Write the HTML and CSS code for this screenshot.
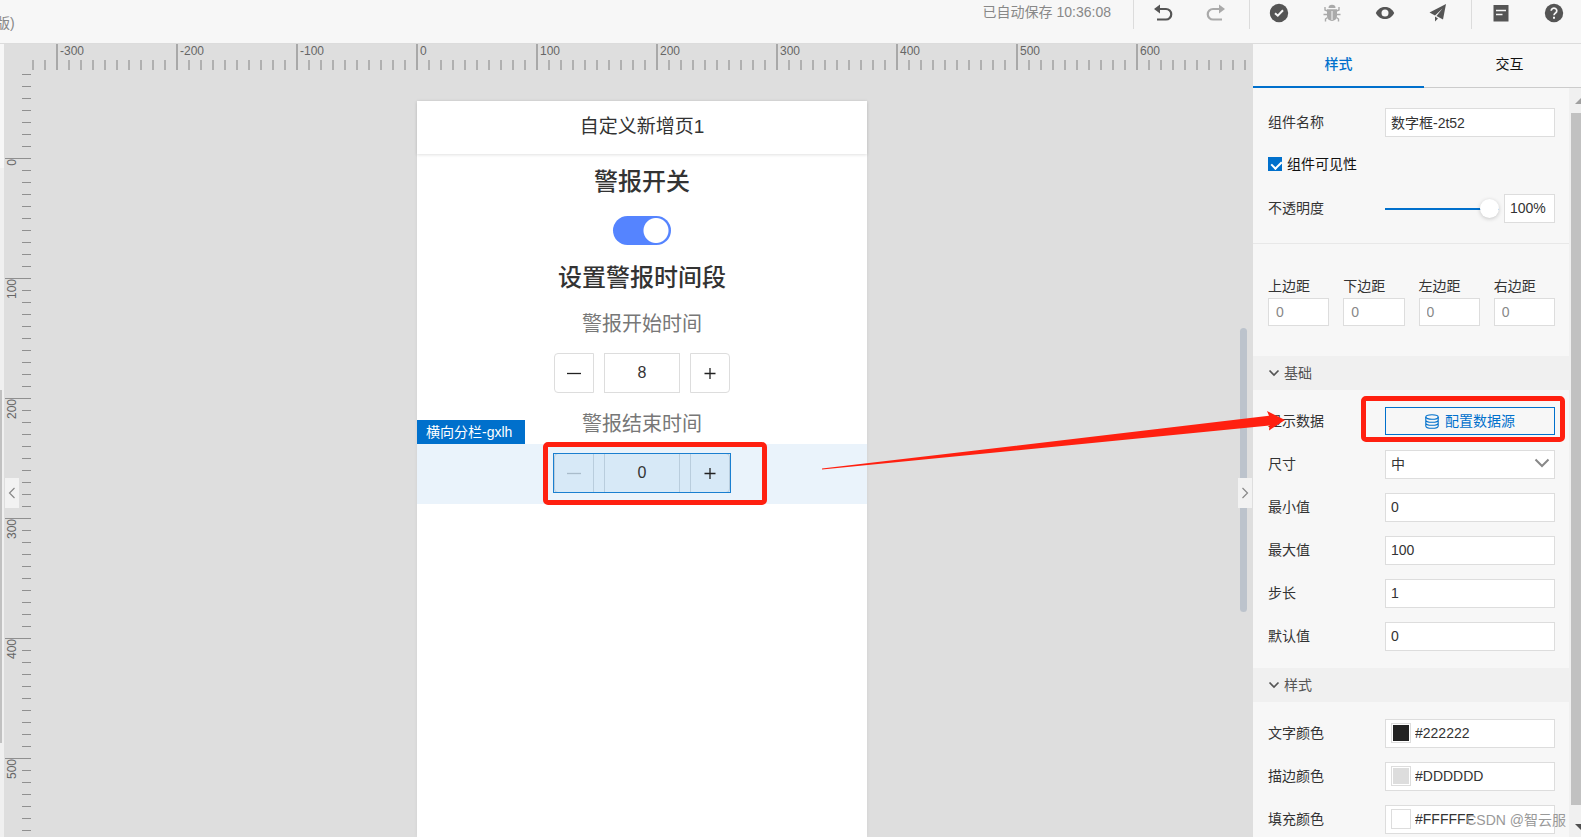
FILE: index.html
```html
<!DOCTYPE html>
<html lang="zh-CN">
<head>
<meta charset="utf-8">
<title>自定义新增页1</title>
<link rel="stylesheet" href="styles.css">
</head>
<body>
<header class="topbar">
  <span class="project">版)</span>
  <div class="actions">
    <span class="saved">已自动保存 10:36:08</span>
    <div class="group">
      <button class="tool" aria-label="撤销"><svg width="20" height="20" viewBox="0 0 20 20"><path d="M6 6H13a3.900 3.900 0 0 1 0 10.500H4" fill="none" stroke="#555" stroke-width="2.200"/><path d="M1 6l6-4.500v9z" fill="#555"/></svg></button>
      <button class="tool" aria-label="重做"><svg width="20" height="20" viewBox="0 0 20 20"><path d="M14 6H7a3.900 3.900 0 0 0 0 10.500h9" fill="none" stroke="#aaa" stroke-width="2.200"/><path d="M19 6l-6-4.500v9z" fill="#aaa"/></svg></button>
    </div>
    <div class="group">
      <button class="tool" aria-label="检查"><svg width="20" height="20" viewBox="0 0 20 20"><circle cx="10" cy="10" r="9.200" fill="#555"/><path d="M6 10.200l2.800 2.500 5.200-5.400" fill="none" stroke="#f7f7f7" stroke-width="2"/></svg></button>
      <button class="tool" aria-label="调试"><svg width="20" height="20" viewBox="0 0 20 20"><path d="M6.500 5a3.500 3.200 0 0 1 7 0z" fill="#aaa"/><path d="M5 6.200h10V13a5 5 0 0 1-10 0z" fill="#aaa"/><path d="M10 8v9" stroke="#f7f7f7"/><path d="M5.500 8L3 7V4M5 11.500H1.500M5.500 14.500L3.500 16v2.500M14.500 8L17 7V4M15 11.500h3.500M14.500 14.500l2 1.500v2.500" fill="none" stroke="#aaa" stroke-width="1.400"/></svg></button>
      <button class="tool" aria-label="预览"><svg width="20" height="20" viewBox="0 0 20 20"><path d="M.8 10C3 5.600 6.500 4 10 4s7 1.600 9.200 6c-2.200 4.400-5.700 6-9.200 6S3 14.400.8 10z" fill="#555"/><circle cx="10" cy="10" r="3.500" fill="#f7f7f7"/></svg></button>
      <button class="tool" aria-label="发布"><svg width="20" height="20" viewBox="0 0 20 20"><path d="M18 1L1.500 9.500l5.500 3L14.500 5.500 8.500 13l6.500 3.500z" fill="#555"/><path d="M7 13.500V18.500l3-3z" fill="#555"/></svg></button>
    </div>
    <div class="group">
      <button class="tool" aria-label="文档"><svg width="20" height="20" viewBox="0 0 20 20"><path d="M2.500 2h15v16.500h-15z" fill="#555"/><path d="M5 7.500h10M5 11.500h6.500" stroke="#f7f7f7" stroke-width="1.600"/></svg></button>
      <button class="tool" aria-label="帮助"><svg width="20" height="20" viewBox="0 0 20 20"><circle cx="10" cy="10" r="9.200" fill="#555"/><path d="M7.200 7.800a2.800 2.600 0 1 1 4.300 2.200c-1 .7-1.500 1.200-1.500 2.300" fill="none" stroke="#f7f7f7" stroke-width="1.700"/><path d="M9 13.700h2v2H9z" fill="#f7f7f7"/></svg></button>
    </div>
  </div>
</header>

<main class="workspace">
  <div class="leftstrip"><div class="leftthumb"></div></div>

  <section class="canvas">
    <div class="hruler">
      <span class="lead"></span><span class="seg">-300</span><span class="seg">-200</span><span class="seg">-100</span><span class="seg">0</span><span class="seg">100</span><span class="seg">200</span><span class="seg">300</span><span class="seg">400</span><span class="seg">500</span><span class="seg">600</span>
    </div>
    <div class="stagerow">
      <div class="vruler">
        <div class="vlead"></div>
        <div class="vseg"><span>0</span></div><div class="vseg"><span>100</span></div><div class="vseg"><span>200</span></div><div class="vseg"><span>300</span></div><div class="vseg"><span>400</span></div><div class="vseg"><span>500</span></div>
      </div>
      <div class="stage">
        <div class="phone">
          <div class="phonetitle">自定义新增页1</div>
          <h2 class="headline first">警报开关</h2>
          <div class="switchrow"><input type="checkbox" class="switch" aria-label="警报开关" checked></div>
          <h2 class="headline">设置警报时间段</h2>
          <label class="caption" for="start">警报开始时间</label>
          <div class="steprow">
            <div class="stepper">
              <button class="step minus" aria-label="减少"><svg width="14" height="14" viewBox="0 0 14 14"><path d="M0 7.500h14" stroke="currentColor" stroke-width="1.300"/></svg></button>
              <input class="stepvalue" id="start" value="8">
              <button class="step plus" aria-label="增加"><svg width="14" height="14" viewBox="0 0 14 14"><path d="M1.500 7.500h11M7 2v11" stroke="currentColor" stroke-width="1.300"/></svg></button>
            </div>
          </div>
          <label class="caption" for="end">警报结束时间</label>
          <div class="steprow selected">
            <span class="tag">横向分栏-gxlh</span>
            <div class="stepper">
              <button class="step minus" aria-label="减少" disabled><svg width="14" height="14" viewBox="0 0 14 14"><path d="M0 7.500h14" stroke="currentColor" stroke-width="1.300"/></svg></button>
              <input class="stepvalue" id="end" value="0">
              <button class="step plus" aria-label="增加"><svg width="14" height="14" viewBox="0 0 14 14"><path d="M1.500 7.500h11M7 2v11" stroke="currentColor" stroke-width="1.300"/></svg></button>
            </div>
          </div>
        </div>
      </div>
    </div>
    <div class="canvasthumb"></div>
    <button class="fold foldleft" aria-label="收起左侧"><svg width="8" height="12" viewBox="0 0 8 12"><path d="M6.500 1L1.500 6l5 5" fill="none" stroke="#888" stroke-width="1.200"/></svg></button>
    <button class="fold foldright" aria-label="收起右侧"><svg width="8" height="12" viewBox="0 0 8 12"><path d="M1.500 1l5 5-5 5" fill="none" stroke="#888" stroke-width="1.200"/></svg></button>
  </section>

  <aside class="panel">
    <nav class="tabs"><button class="tab active">样式</button><button class="tab">交互</button></nav>
    <div class="panelbody">
      <form class="form">
        <div class="rows general">
          <div class="row"><label for="name">组件名称</label><input class="box" id="name" value="数字框-2t52"></div>
          <div class="checkrow"><input type="checkbox" class="check" id="visible" checked><label for="visible">组件可见性</label></div>
          <div class="row"><label for="opacity">不透明度</label>
            <div class="opacity"><input type="range" class="slider" id="opacity" value="100"><input class="box percent" aria-label="不透明度数值" value="100%"></div></div>
        </div>
        <div class="margins">
          <div class="margin"><label for="mt">上边距</label><input class="box" id="mt" placeholder="0"></div>
          <div class="margin"><label for="mb">下边距</label><input class="box" id="mb" placeholder="0"></div>
          <div class="margin"><label for="ml">左边距</label><input class="box" id="ml" placeholder="0"></div>
          <div class="margin"><label for="mr">右边距</label><input class="box" id="mr" placeholder="0"></div>
        </div>
        <h3 class="section"><svg width="12" height="8" viewBox="0 0 12 8"><path d="M1.500 1.500L6 6l4.500-4.500" fill="none" stroke="#555" stroke-width="1.700"/></svg>基础</h3>
        <div class="rows">
          <div class="row"><span>显示数据</span>
            <div class="marked"><button type="button" class="source"><svg width="14" height="15" viewBox="0 0 14 15"><g fill="none" stroke="#0070cc" stroke-width="1.100"><ellipse cx="7" cy="3" rx="6.200" ry="2.300"/><path d="M.8 3v9c0 1.300 2.800 2.300 6.200 2.300s6.200-1 6.200-2.300V3M.8 6c0 1.300 2.800 2.300 6.200 2.300S13.200 7.300 13.200 6M.8 9c0 1.300 2.800 2.300 6.200 2.300s6.200-1 6.200-2.300"/></g></svg>配置数据源</button></div></div>
          <div class="row"><label for="size">尺寸</label>
            <div class="selectwrap"><select class="box" id="size"><option>中</option></select><svg width="16" height="10" viewBox="0 0 16 10"><path d="M1.500 1.500L8 8l6.500-6.500" fill="none" stroke="#888" stroke-width="2"/></svg></div></div>
          <div class="row"><label for="min">最小值</label><input class="box" id="min" value="0"></div>
          <div class="row"><label for="max">最大值</label><input class="box" id="max" value="100"></div>
          <div class="row"><label for="stepsize">步长</label><input class="box" id="stepsize" value="1"></div>
          <div class="row"><label for="default">默认值</label><input class="box" id="default" value="0"></div>
        </div>
        <h3 class="section"><svg width="12" height="8" viewBox="0 0 12 8"><path d="M1.500 1.500L6 6l4.500-4.500" fill="none" stroke="#555" stroke-width="1.700"/></svg>样式</h3>
        <div class="rows">
          <div class="row"><label for="c1">文字颜色</label><div class="box color"><span class="swatch dark"></span><input id="c1" value="#222222"></div></div>
          <div class="row"><label for="c2">描边颜色</label><div class="box color"><span class="swatch grey"></span><input id="c2" value="#DDDDDD"></div></div>
          <div class="row"><label for="c3">填充颜色</label><div class="box color"><span class="swatch white"></span><input id="c3" value="#FFFFFF"></div></div>
        </div>
      </form>
      <div class="scrollbar">
        <svg width="16" height="25" viewBox="0 0 16 25"><path d="M4 16l6-6 6 6z" fill="#a0a0a0"/></svg>
        <div class="scrollthumb"></div>
        <svg width="16" height="32" viewBox="0 0 16 32"><path d="M4 19l6 6 6-6z" fill="#505050"/></svg>
      </div>
    </div>
  </aside>
</main>
<svg class="arrow" width="464" height="60" viewBox="0 0 464 60"><path d="M0 58.600L447 5.700 445 1l18 9-16 10.500.5-5L0 59.600z" fill="#ff2010"/></svg>
<div class="watermark">CSDN @智云服</div>
</body>
</html>
```
FILE: styles.css
```css
* { box-sizing: border-box; }
body {
  margin: 0;
  height: 100vh;
  display: flex;
  flex-direction: column;
  overflow: hidden;
  position: relative;
  background: #f7f7f7;
  color: #333;
  font: 14px/20px "Liberation Sans", "Noto Sans CJK SC", sans-serif;
}
button, input, select { font: inherit; color: inherit; margin: 0; padding: 0; border: 0; background: none; }
input { min-width: 0; }
svg { display: block; flex: none; }

.topbar { flex: none; height: 44px; display: flex; justify-content: space-between; align-items: flex-start; border-bottom: 1px solid #dcdcdc; }
.project { margin-left: -4px; padding-top: 13px; color: #888; }
.actions { display: flex; height: 29px; }
.saved { padding: 2px 22px 0 0; color: #888; }
.group { display: flex; border-left: 1px solid #dcdcdc; padding: 0 7px 0 2px; }
.group:last-child { padding-right: 1px; }
.tool { width: 53px; height: 25px; display: flex; align-items: center; justify-content: center; }

.workspace { flex: 1; min-height: 0; display: flex; }
.leftstrip { width: 4px; flex: none; padding-top: 346px; background: linear-gradient(#f7f7f7 124px, #f0f0f0 124px); }
.leftthumb { width: 2px; height: 353px; background: #c1c1c1; }

.canvas { flex: 1; min-width: 0; display: flex; flex-direction: column; position: relative; background: #dedede; overflow: hidden; color: #666; }
.hruler { height: 26px; flex: none; display: flex; padding-left: 28px; overflow: hidden; font-size: 12px; line-height: 14px; }
.lead, .seg { flex: none; background: repeating-linear-gradient(to right, #b0b0b0 0 2px, transparent 2px 12px) left bottom / 100% 10px no-repeat; }
.lead { width: 24px; }
.seg { width: 120px; padding-left: 4px; background: linear-gradient(#a8a8a8, #a8a8a8) left top / 2px 100% no-repeat, repeating-linear-gradient(to right, #b0b0b0 0 2px, transparent 2px 12px) left bottom / 100% 10px no-repeat; }
.stagerow { flex: 1; min-height: 0; display: flex; }
.vruler { width: 27px; flex: none; padding: 4px 0 0 1px; overflow: hidden; font-size: 12px; line-height: 14px; }
.vlead { height: 84px; background: repeating-linear-gradient(#909090 0 1px, transparent 1px 12px) right top / 9px 100% no-repeat; }
.vseg { height: 120px; padding-top: 1px; background: linear-gradient(#909090, #909090) left top / 100% 1px no-repeat, repeating-linear-gradient(#909090 0 1px, transparent 1px 12px) right top / 9px 100% no-repeat; }
.vseg span { display: block; width: 14px; writing-mode: vertical-rl; transform: rotate(180deg); }
.stage { flex: 1; display: flex; justify-content: center; padding-top: 31px; }
.phone { width: 450px; background: #fff; color: #333; box-shadow: 0 0 4px rgba(0, 0, 0, .06); }
.phonetitle { height: 53px; text-align: center; font-size: 19px; line-height: 52px; box-shadow: 0 1px 3px rgba(0, 0, 0, .12); }
.headline { margin: 0; text-align: center; font-size: 24px; font-weight: 500; line-height: 52px; }
.headline.first { line-height: 56px; }
.switchrow { height: 42px; display: flex; align-items: flex-start; justify-content: center; padding-top: 6px; }
.switch { appearance: none; width: 58px; height: 29px; border-radius: 15px; background: radial-gradient(circle at 43px 50%, #fff 12px, #5584ff 13px); }
.caption { display: block; height: 40px; line-height: 41px; text-align: center; font-size: 20px; color: #777; }
.steprow { height: 60px; display: flex; align-items: flex-start; justify-content: center; padding-top: 9px; position: relative; }
.stepper { display: flex; gap: 10px; position: relative; }
.step { width: 40px; height: 40px; display: flex; align-items: center; justify-content: center; border: 1px solid #ddd; background: #fff; color: #222; }
.minus { border-radius: 4px 0 0 4px; }
.plus { border-radius: 0 4px 4px 0; }
.stepvalue { width: 76px; height: 40px; border: 1px solid #ddd; text-align: center; font-size: 16px; }
.selected { background: #eaf3fb; }
.selected .stepper { background: #d7e9f7; }
.selected .step, .selected .stepvalue { background: #d7e9f7; border-color: #b9cddd; }
.selected .step:disabled { color: #a9bccb; }
.selected .stepper::before { content: ""; position: absolute; inset: 0 -1px; border: 1px solid #1a7fd0; pointer-events: none; }
.selected .stepper::after { content: ""; position: absolute; inset: -11px -37px -12px -11px; border: 5px solid #ff2010; border-radius: 5px; pointer-events: none; }
.tag { position: absolute; left: 0; bottom: 100%; height: 24px; padding: 0 13px 0 9px; line-height: 25px; background: #0070cc; color: #fff; }
.canvasthumb { position: absolute; right: 6px; top: 284px; width: 7px; height: 284px; border-radius: 4px; background: #bcc3cc; }
.fold { position: absolute; top: 434px; width: 14px; height: 30px; display: flex; align-items: center; justify-content: center; background: #f2f2f2; }
.foldleft { left: 1px; }
.foldright { right: 1px; }

.panel { width: 328px; flex: none; display: flex; flex-direction: column; overflow: hidden; }
.tabs { flex: none; display: flex; height: 44px; box-shadow: inset 0 -1px #ccc; }
.tab { flex: none; width: 171px; padding-bottom: 4px; color: #111; }
.tab.active { padding-bottom: 2px; color: #0070cc; font-weight: 500; border-bottom: 2px solid #0070cc; }
.panelbody { flex: 1; min-height: 0; display: flex; }
.form { flex: 1; min-width: 0; overflow: hidden; }
.rows { display: flex; flex-direction: column; gap: 14px; padding: 17px 14px 17px 15px; }
.general { padding: 20px 14px 20px 15px; border-bottom: 1px solid #e8e8e8; }
.row { display: grid; grid-template-columns: 117px minmax(0, 1fr); align-items: center; height: 29px; }
.row > label, .row > span { padding-bottom: 2px; }
.box { width: 100%; height: 29px; padding: 0 5px 1px; border: 1px solid #ddd; background: #fff; }
.checkrow { height: 29px; display: flex; align-items: center; gap: 5px; padding-bottom: 3px; color: #111; }
.check { appearance: none; width: 14px; height: 14px; background: #0070cc; position: relative; }
.check::after { content: ""; position: absolute; left: 5px; top: 2px; width: 5px; height: 8px; border: solid #fff; border-width: 0 2px 2px 0; transform: rotate(45deg); }
.opacity { display: flex; gap: 5px; align-items: center; }
.slider { appearance: none; flex: 1; height: 19px; background: linear-gradient(#0070cc, #0070cc) center / 100% 2px no-repeat; }
.slider::-webkit-slider-thumb { appearance: none; width: 19px; height: 19px; border-radius: 50%; background: #fff; box-shadow: 0 1px 4px rgba(0, 0, 0, .2); }
.percent { flex: none; width: 51px; }
.margins { display: grid; grid-template-columns: repeat(4, minmax(0, 1fr)); gap: 14px; padding: 32px 14px 30px 15px; }
.margin { display: flex; flex-direction: column; gap: 2px; }
.margin .box { height: 28px; padding: 0 7px; }
.margin .box::placeholder { color: #888; }
.section { margin: 0; height: 34px; display: flex; align-items: center; gap: 4px; padding-left: 15px; background: #f0f0f0; font-size: 14px; font-weight: 400; color: #555; }
.marked { position: relative; align-self: start; }
.marked::after { content: ""; position: absolute; inset: -11px -10px -7px -24px; border: 5px solid #ff2010; border-radius: 5px; pointer-events: none; }
.source { width: 100%; height: 28px; display: flex; align-items: center; justify-content: center; gap: 6px; border: 1px solid #0070cc; color: #0070cc; }
.selectwrap { position: relative; }
.selectwrap select { display: block; appearance: none; }
.selectwrap svg { position: absolute; right: 5px; top: 8px; pointer-events: none; }
.color { display: flex; align-items: center; gap: 4px; }
.color input { flex: 1; }
.swatch { flex: none; width: 20px; height: 20px; border: 1px solid #ddd; padding: 1px; background-clip: content-box; }
.dark { background-color: #222; }
.grey { background-color: #ddd; }
.white { background-color: #fff; }
.scrollbar { width: 12px; flex: none; display: flex; flex-direction: column; padding-left: 2px; background: #f0f0f0; overflow: hidden; }
.scrollthumb { flex: 1; background: #c1c1c1; }

.arrow { position: absolute; left: 822px; top: 410px; pointer-events: none; }
.watermark { position: absolute; right: 15px; bottom: 7px; color: #999; pointer-events: none; }
```
